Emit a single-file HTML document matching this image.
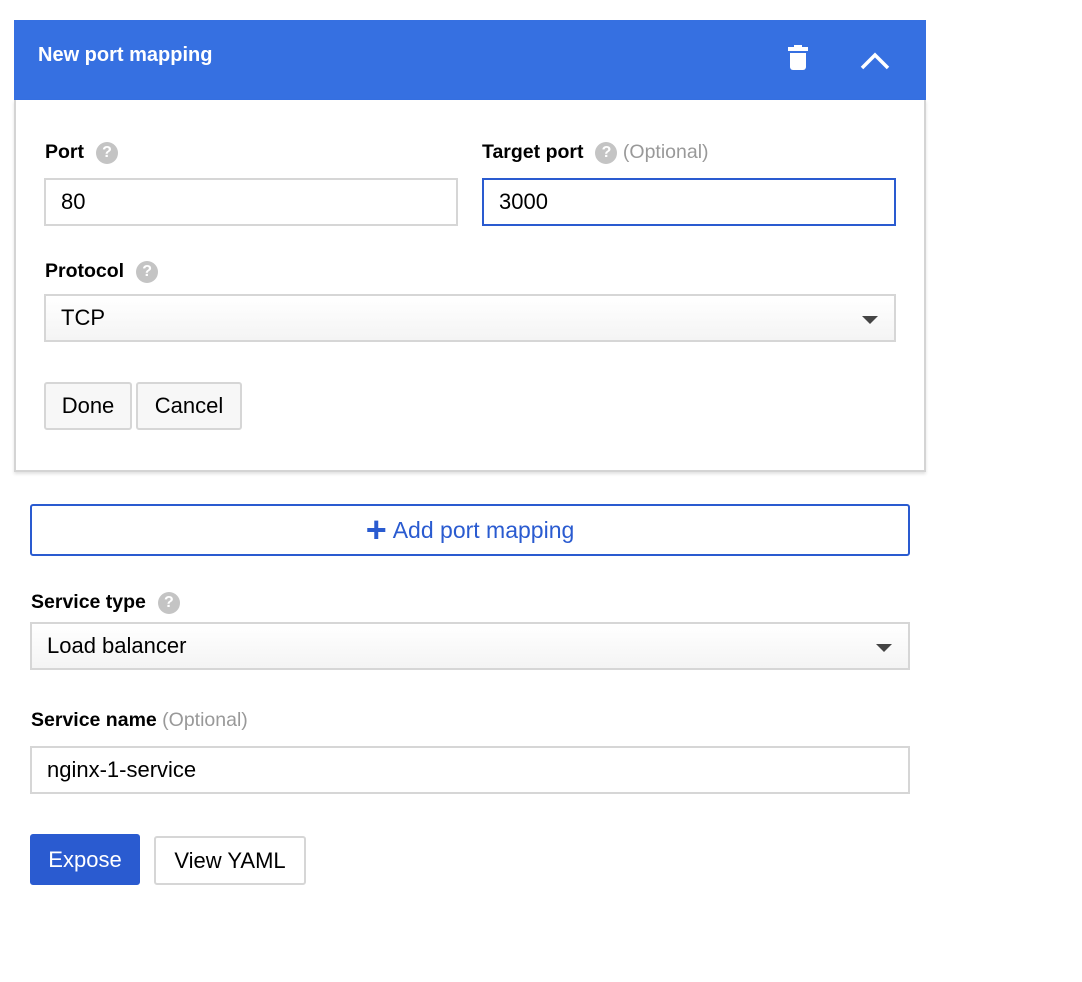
<!DOCTYPE html>
<html><head><meta charset="utf-8"><style>
*{box-sizing:border-box;margin:0;padding:0}
body{width:1082px;height:982px;background:#fff;font-family:"Liberation Sans",Arial,sans-serif;position:relative;overflow:hidden;color:#000}
.a{position:absolute}
.hdr{left:14px;top:20px;width:912px;height:80px;background:#3670e1}
.title{left:38px;top:44px;color:#fff;font-weight:bold;font-size:20px}
.card{left:14px;top:100px;width:912px;height:372px;border:2px solid #d4d4d4;border-top:none;box-shadow:0 2px 3px rgba(0,0,0,.12)}
.lbl{font-weight:bold;font-size:19.5px}
.q{display:inline-block;width:22px;height:22px;border-radius:50%;background:#c4c4c4;color:#fff;font-size:16px;font-weight:bold;text-align:center;line-height:22px;vertical-align:middle;margin-left:12px}
.opt{color:#999;font-weight:normal;font-size:19.5px}
.inp{border:2px solid #d6d6d6;font-size:22px;padding-left:15px;display:flex;align-items:center}
.sel{background:linear-gradient(#fff,#f4f4f4)}
.tri{position:absolute;right:16px;top:20px;border-left:8px solid transparent;border-right:8px solid transparent;border-top:8px solid #444}
.btn{border:2px solid #d6d6d6;border-radius:3px;background:#f7f7f7;font-size:22px;display:flex;align-items:center;justify-content:center}
</style></head><body>
<div class="a hdr"></div>
<div class="a title">New port mapping</div>
<svg class="a" style="left:787px;top:45px" width="22" height="26" viewBox="0 0 22 26"><rect x="1" y="2" width="20" height="4" fill="#fff"/><rect x="7" y="0" width="8" height="3" fill="#fff"/><path d="M3 8h16v14a3 3 0 0 1-3 3H6a3 3 0 0 1-3-3z" fill="#fff"/></svg>
<svg class="a" style="left:860px;top:52px" width="30" height="18" viewBox="0 0 30 18"><path d="M2 16L15 3l13 13" stroke="#fff" stroke-width="3.5" fill="none"/></svg>
<div class="a card"></div>
<div class="a lbl" style="left:45px;top:141px">Port<span class="q">?</span></div>
<div class="a lbl" style="left:482px;top:141px">Target port<span class="q">?</span> <span class="opt">(Optional)</span></div>
<div class="a inp" style="left:44px;top:178px;width:414px;height:48px">80</div>
<div class="a inp" style="left:482px;top:178px;width:414px;height:48px;border-color:#2a5bd0">3000</div>
<div class="a lbl" style="left:45px;top:260px">Protocol<span class="q">?</span></div>
<div class="a inp sel" style="left:44px;top:294px;width:852px;height:48px">TCP<div class="tri"></div></div>
<div class="a btn" style="left:44px;top:382px;width:88px;height:48px">Done</div>
<div class="a btn" style="left:136px;top:382px;width:106px;height:48px">Cancel</div>
<div class="a" style="left:30px;top:504px;width:880px;height:52px;border:2px solid #2a5bd0;border-radius:3px;color:#2a5bd0;font-size:23px;display:flex;align-items:center;justify-content:center"><span style="font-size:36px;font-weight:bold;margin-right:6px;line-height:1">+</span>Add port mapping</div>
<div class="a lbl" style="left:31px;top:591px">Service type<span class="q">?</span></div>
<div class="a inp sel" style="left:30px;top:622px;width:880px;height:48px">Load balancer<div class="tri"></div></div>
<div class="a lbl" style="left:31px;top:709px">Service name <span class="opt">(Optional)</span></div>
<div class="a inp" style="left:30px;top:746px;width:880px;height:48px">nginx-1-service</div>
<div class="a btn" style="left:30px;top:834px;width:110px;height:51px;background:#2a5bd0;border-color:#2a5bd0;color:#fff">Expose</div>
<div class="a btn" style="left:154px;top:836px;width:152px;height:49px;background:#fff">View YAML</div>
</body></html>
